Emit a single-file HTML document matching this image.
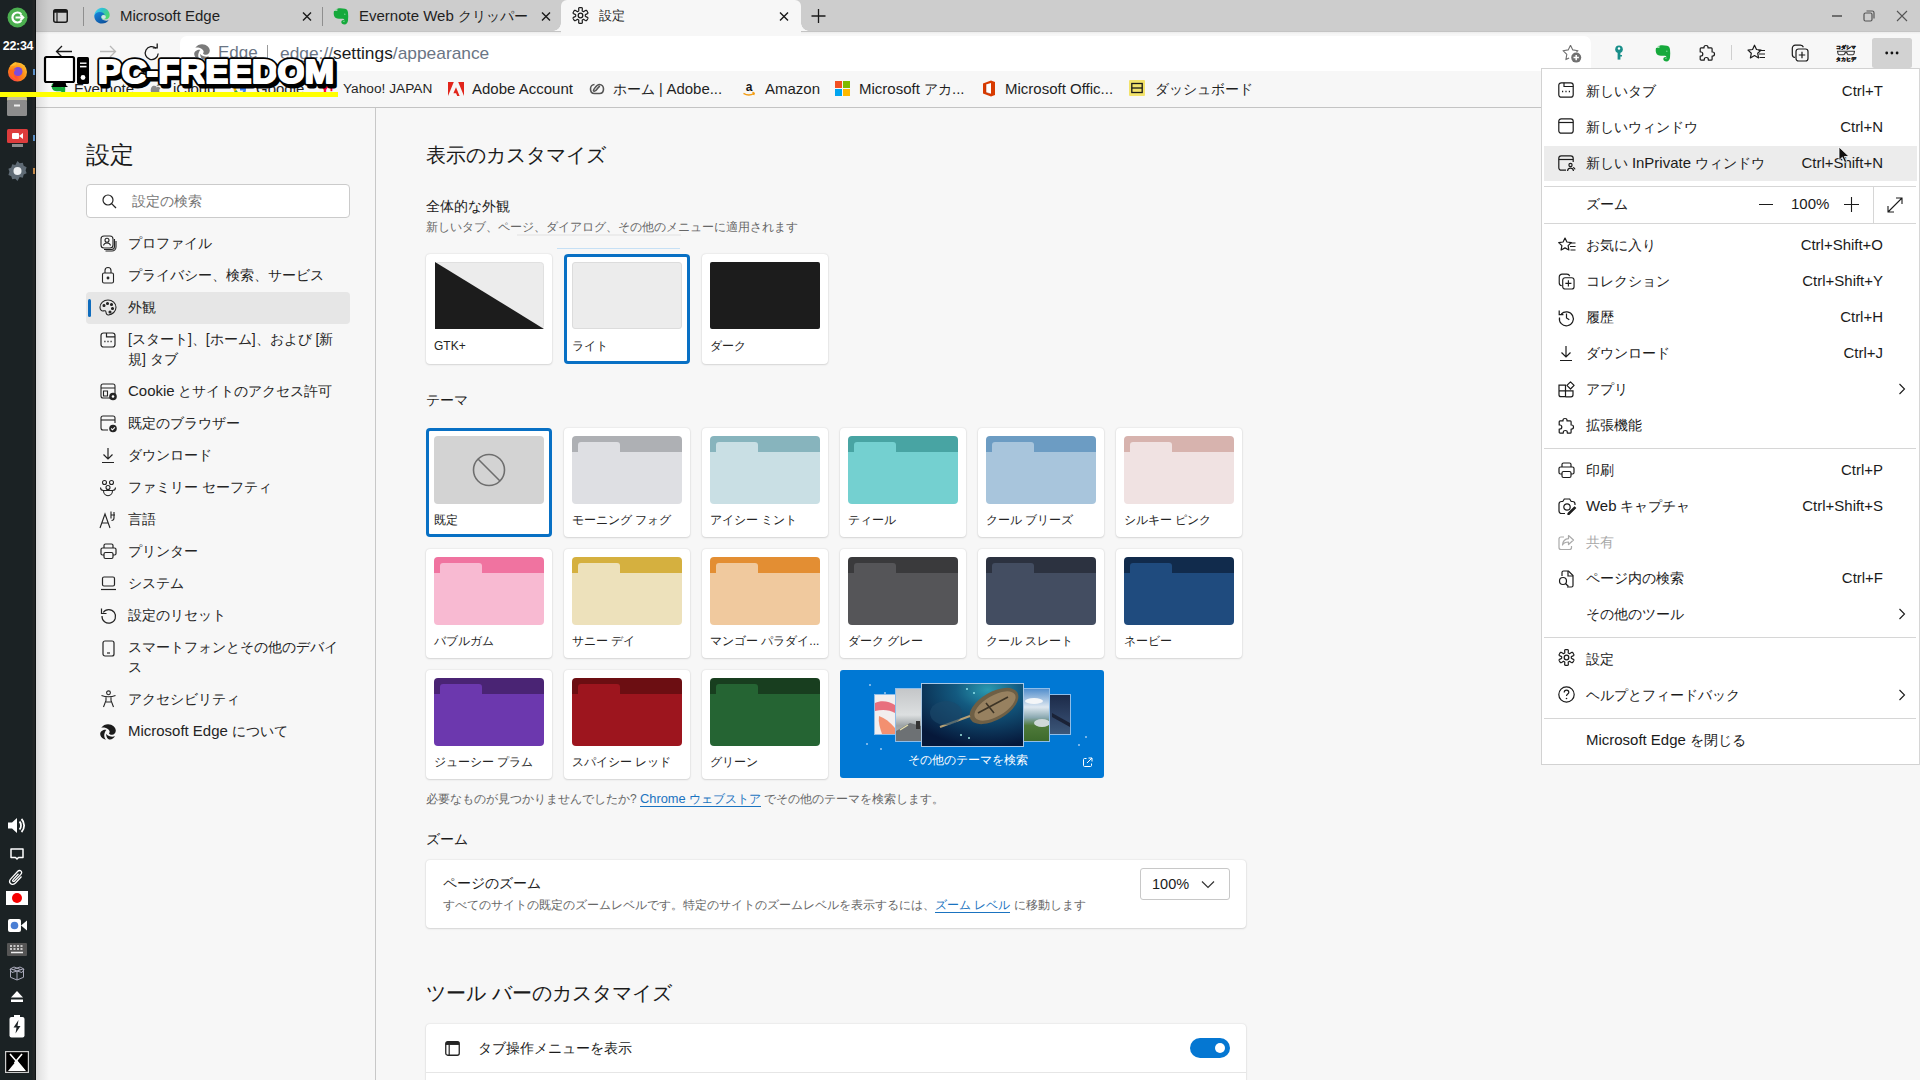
<!DOCTYPE html>
<html><head><meta charset="utf-8">
<style>
*{box-sizing:border-box}
html,body{margin:0;padding:0;width:1920px;height:1080px;overflow:hidden;background:#f7f7f7;font-family:"Liberation Sans",sans-serif;color:#242424}
.a{position:absolute}
.t{position:absolute;white-space:nowrap;line-height:20px;font-size:14px}
.l{font-size:1.07em}
svg{position:absolute;overflow:visible}
#taskbar{left:0;top:0;width:36px;height:1080px;background:linear-gradient(90deg,#1b2224 0,#1b2224 32px,#222526 33px,#222526 35px,#0e1213 35px)}
#tabstrip{left:36px;top:0;width:1884px;height:31px;background:#cdcdcd}
#toolbar{left:36px;top:31px;width:1884px;height:40px;background:#f7f7f7}
#bookmarks{left:36px;top:71px;width:1884px;height:37px;background:#f7f7f7;border-bottom:1px solid #c4c4c4}
#page{left:36px;top:108px;width:1884px;height:972px;background:#f7f7f7}
#sidebar-border{left:375px;top:108px;width:1px;height:972px;background:#c8c8c8}
.card{position:absolute;background:#fff;border-radius:4px;box-shadow:0 0 2px rgba(0,0,0,.14),0 1px 2px rgba(0,0,0,.10)}
.sel{box-shadow:none;border:3px solid #0f6cbd}
.pv{position:absolute;left:8px;top:8px;width:110px;height:68px;border-radius:4px;overflow:hidden}
.pv .band{position:absolute;left:0;top:0;width:110px;height:16px}
.pv .tab{position:absolute;left:6px;top:6px;width:42px;height:12px;border-radius:3px 3px 0 0}
.pv .body{position:absolute;left:0;top:16px;width:110px;height:52px}
.lbl{position:absolute;left:8px;top:82px;line-height:20px;font-size:12px;white-space:nowrap;color:#242424}
.mi{position:absolute;left:1586px;font-size:14px;line-height:20px;white-space:nowrap;color:#1b1b1b}
.ms{position:absolute;right:37px;font-size:14px;line-height:20px;white-space:nowrap;color:#1b1b1b;text-align:right}
.msep{position:absolute;left:1544px;width:372px;height:1px;background:#d6d6d6}
.si{position:absolute;left:128px;font-size:14px;line-height:20px;white-space:nowrap;color:#242424}
</style></head>
<body>
<!-- page background & regions -->
<div class="a" id="page"></div>
<div class="a" id="tabstrip"></div>
<div class="a" id="toolbar"></div>
<div class="a" style="left:36px;top:31px;width:525px;height:1px;background:#c4c4c4"></div>
<div class="a" style="left:801px;top:31px;width:1119px;height:1px;background:#c4c4c4"></div>
<div class="a" style="left:36px;top:32px;width:525px;height:2px;background:linear-gradient(#ececec,#f5f5f5)"></div>
<div class="a" style="left:801px;top:32px;width:1119px;height:2px;background:linear-gradient(#ececec,#f5f5f5)"></div>
<div class="a" style="left:36px;top:71px;width:1884px;height:1px;background:#ededed"></div>
<div class="a" id="bookmarks"></div>
<div class="a" id="sidebar-border"></div>
<div class="a" id="taskbar"></div>

<!-- ===== TAB STRIP ===== -->
<svg style="left:53px;top:9px" width="15" height="14" viewBox="0 0 15 14"><rect x="0.75" y="0.75" width="13.5" height="12.5" rx="2" fill="none" stroke="#1a1a1a" stroke-width="1.5"/><rect x="0.75" y="0.75" width="13.5" height="3" fill="#1a1a1a"/><line x1="4" y1="3.5" x2="4" y2="13" stroke="#1a1a1a" stroke-width="1.2"/></svg>
<div class="a" style="left:83px;top:7px;width:1px;height:19px;background:#8f8f8f"></div>
<svg style="left:93.5px;top:6.5px" width="16" height="17" viewBox="0 0 16 16"><defs><linearGradient id="eg1" x1="0" y1="0" x2="1" y2=".6"><stop offset="0" stop-color="#4fd2ff"/><stop offset=".45" stop-color="#2ec0cf"/><stop offset="1" stop-color="#4ed86a"/></linearGradient><linearGradient id="eg2" x1="0" y1="0" x2=".8" y2="1"><stop offset="0" stop-color="#1a86e0"/><stop offset="1" stop-color="#0b4f98"/></linearGradient></defs><path d="M8 .3c4.3 0 7.7 3.2 7.7 7.2 0 2.5-1.6 4.3-3.6 4.3H8.5C6 11.8 5.5 9 7 7.8 5.7 7.3 3.4 7.4.3 8.6.5 4 3.8.3 8 .3z" fill="url(#eg1)"/><ellipse cx="9.6" cy="9.6" rx="2.3" ry="2" fill="#d5e2e6"/><path d="M.3 8.4C1 5.9 3.2 4.4 5.8 4.4c2.8 0 4.7 1.5 5 3-1.5-.5-3.6 0-3.8 1.9-.2 2.3 2.4 4 5.4 3.9.8 0 1.6-.2 2.3-.5-1.4 2-3.9 3.3-6.7 3.3C3.6 16 .3 12.6.3 8.4z" fill="url(#eg2)"/></svg>
<div class="t" style="left:120px;top:6px;font-size:15px;color:#1f1f1f">Microsoft Edge</div>
<svg style="left:302px;top:12px" width="10" height="9" viewBox="0 0 10 9"><path d="M1 .5L9 8.5M9 .5L1 8.5" stroke="#1a1a1a" stroke-width="1.4"/></svg>
<div class="a" style="left:322px;top:7px;width:1px;height:19px;background:#8f8f8f"></div>
<svg style="left:332.5px;top:7.5px" width="16" height="17" viewBox="0 0 16 17"><path d="M4.3 .8L5.8.3c2-.2 4.3 0 6.2.5 2 .5 2.8 1.8 3 3.7.3 2.5.3 5.5 0 8-.2 2.3-1.5 4-3.5 4-2 0-3.2-1-3.2-2.5 0-1.2.9-2 2-2 .7 0 1.1.3 1.3.6-.1-.9-.6-1.6-1.6-1.8H6c-2.5 0-4.2-1-4.8-2.8-.6-1.5-.6-3.5-.2-5L4.3 3z" fill="#16a93c"/><path d="M1.4 2.8h2.5V.6z" fill="#7fd896"/><circle cx="11.8" cy="6.2" r=".8" fill="#6fd48a"/><path d="M10 13.8c.5-.6 1.4-.5 1.6.2" fill="none" stroke="#7fe09a" stroke-width=".9"/></svg>
<div class="t" style="left:359px;top:6px;font-size:15px;color:#1f1f1f">Evernote Web <span style="font-size:14px">クリッパー</span></div>
<svg style="left:541px;top:12px" width="10" height="9" viewBox="0 0 10 9"><path d="M1 .5L9 8.5M9 .5L1 8.5" stroke="#1a1a1a" stroke-width="1.4"/></svg>
<!-- active tab -->
<div class="a" style="left:561px;top:0;width:240px;height:32px;background:#f7f7f7;border-radius:6px 6px 0 0"></div>
<div class="a" style="left:553px;top:23px;width:8px;height:8px;background:radial-gradient(circle at 0 0,#cdcdcd 7.5px,#f7f7f7 8px)"></div>
<div class="a" style="left:801px;top:23px;width:8px;height:8px;background:radial-gradient(circle at 100% 0,#cdcdcd 7.5px,#f7f7f7 8px)"></div>
<svg style="left:571.5px;top:7px" width="17" height="17" viewBox="0 0 17 17"><path d="M8.50 0.60 L8.64 0.60 L8.78 0.60 L8.91 0.61 L9.05 0.62 L9.19 0.63 L9.33 0.64 L9.46 0.66 L9.60 0.68 L9.73 0.71 L9.87 0.75 L10.00 0.80 L10.12 0.89 L10.23 1.03 L10.30 1.27 L10.34 1.64 L10.32 2.16 L10.27 2.72 L10.22 3.21 L10.21 3.55 L10.23 3.76 L10.27 3.89 L10.33 3.98 L10.39 4.04 L10.46 4.09 L10.54 4.13 L10.61 4.18 L10.68 4.22 L10.76 4.26 L10.83 4.30 L10.90 4.34 L10.98 4.38 L11.05 4.42 L11.12 4.47 L11.19 4.51 L11.26 4.55 L11.34 4.59 L11.42 4.63 L11.50 4.66 L11.61 4.66 L11.74 4.64 L11.94 4.55 L12.22 4.36 L12.62 4.08 L13.08 3.76 L13.52 3.48 L13.86 3.32 L14.11 3.27 L14.28 3.29 L14.42 3.36 L14.53 3.44 L14.63 3.54 L14.72 3.64 L14.81 3.75 L14.89 3.86 L14.97 3.97 L15.05 4.08 L15.13 4.20 L15.20 4.31 L15.27 4.43 L15.34 4.55 L15.41 4.67 L15.48 4.79 L15.54 4.91 L15.60 5.04 L15.66 5.16 L15.72 5.29 L15.77 5.41 L15.82 5.54 L15.86 5.67 L15.90 5.81 L15.91 5.95 L15.90 6.10 L15.83 6.26 L15.67 6.45 L15.36 6.66 L14.90 6.90 L14.38 7.14 L13.94 7.34 L13.64 7.50 L13.47 7.62 L13.37 7.73 L13.33 7.82 L13.31 7.91 L13.30 8.00 L13.30 8.08 L13.30 8.16 L13.30 8.25 L13.30 8.33 L13.30 8.42 L13.31 8.50 L13.30 8.58 L13.30 8.67 L13.30 8.75 L13.30 8.84 L13.30 8.92 L13.30 9.00 L13.31 9.09 L13.33 9.18 L13.37 9.27 L13.47 9.38 L13.64 9.50 L13.94 9.66 L14.38 9.86 L14.90 10.10 L15.36 10.34 L15.67 10.55 L15.83 10.74 L15.90 10.90 L15.91 11.05 L15.90 11.19 L15.86 11.33 L15.82 11.46 L15.77 11.59 L15.72 11.71 L15.66 11.84 L15.60 11.96 L15.54 12.09 L15.48 12.21 L15.41 12.33 L15.34 12.45 L15.27 12.57 L15.20 12.69 L15.13 12.80 L15.05 12.92 L14.97 13.03 L14.89 13.14 L14.81 13.25 L14.72 13.36 L14.63 13.46 L14.53 13.56 L14.42 13.64 L14.28 13.71 L14.11 13.73 L13.86 13.68 L13.52 13.52 L13.08 13.24 L12.62 12.92 L12.22 12.64 L11.94 12.45 L11.74 12.36 L11.61 12.34 L11.50 12.34 L11.42 12.37 L11.34 12.41 L11.26 12.45 L11.19 12.49 L11.12 12.53 L11.05 12.58 L10.98 12.62 L10.90 12.66 L10.83 12.70 L10.76 12.74 L10.68 12.78 L10.61 12.82 L10.54 12.87 L10.46 12.91 L10.39 12.96 L10.33 13.02 L10.27 13.11 L10.23 13.24 L10.21 13.45 L10.22 13.79 L10.27 14.28 L10.32 14.84 L10.34 15.36 L10.30 15.73 L10.23 15.97 L10.12 16.11 L10.00 16.20 L9.87 16.25 L9.73 16.29 L9.60 16.32 L9.46 16.34 L9.33 16.36 L9.19 16.37 L9.05 16.38 L8.91 16.39 L8.78 16.40 L8.64 16.40 L8.50 16.40 L8.36 16.40 L8.22 16.40 L8.09 16.39 L7.95 16.38 L7.81 16.37 L7.67 16.36 L7.54 16.34 L7.40 16.32 L7.27 16.29 L7.13 16.25 L7.00 16.20 L6.88 16.11 L6.77 15.97 L6.70 15.73 L6.66 15.36 L6.68 14.84 L6.73 14.28 L6.78 13.79 L6.79 13.45 L6.77 13.24 L6.73 13.11 L6.67 13.02 L6.61 12.96 L6.54 12.91 L6.46 12.87 L6.39 12.82 L6.32 12.78 L6.24 12.74 L6.17 12.70 L6.10 12.66 L6.02 12.62 L5.95 12.58 L5.88 12.53 L5.81 12.49 L5.74 12.45 L5.66 12.41 L5.58 12.37 L5.50 12.34 L5.39 12.34 L5.26 12.36 L5.06 12.45 L4.78 12.64 L4.38 12.92 L3.92 13.24 L3.48 13.52 L3.14 13.68 L2.89 13.73 L2.72 13.71 L2.58 13.64 L2.47 13.56 L2.37 13.46 L2.28 13.36 L2.19 13.25 L2.11 13.14 L2.03 13.03 L1.95 12.92 L1.87 12.80 L1.80 12.69 L1.73 12.57 L1.66 12.45 L1.59 12.33 L1.52 12.21 L1.46 12.09 L1.40 11.96 L1.34 11.84 L1.28 11.71 L1.23 11.59 L1.18 11.46 L1.14 11.33 L1.10 11.19 L1.09 11.05 L1.10 10.90 L1.17 10.74 L1.33 10.55 L1.64 10.34 L2.10 10.10 L2.62 9.86 L3.06 9.66 L3.36 9.50 L3.53 9.38 L3.63 9.27 L3.67 9.18 L3.69 9.09 L3.70 9.00 L3.70 8.92 L3.70 8.84 L3.70 8.75 L3.70 8.67 L3.70 8.58 L3.69 8.50 L3.70 8.42 L3.70 8.33 L3.70 8.25 L3.70 8.16 L3.70 8.08 L3.70 8.00 L3.69 7.91 L3.67 7.82 L3.63 7.73 L3.53 7.62 L3.36 7.50 L3.06 7.34 L2.62 7.14 L2.10 6.90 L1.64 6.66 L1.33 6.45 L1.17 6.26 L1.10 6.10 L1.09 5.95 L1.10 5.81 L1.14 5.67 L1.18 5.54 L1.23 5.41 L1.28 5.29 L1.34 5.16 L1.40 5.04 L1.46 4.91 L1.52 4.79 L1.59 4.67 L1.66 4.55 L1.73 4.43 L1.80 4.31 L1.87 4.20 L1.95 4.08 L2.03 3.97 L2.11 3.86 L2.19 3.75 L2.28 3.64 L2.37 3.54 L2.47 3.44 L2.58 3.36 L2.72 3.29 L2.89 3.27 L3.14 3.32 L3.48 3.48 L3.92 3.76 L4.38 4.08 L4.78 4.36 L5.06 4.55 L5.26 4.64 L5.39 4.66 L5.50 4.66 L5.58 4.63 L5.66 4.59 L5.74 4.55 L5.81 4.51 L5.88 4.47 L5.95 4.42 L6.02 4.38 L6.10 4.34 L6.17 4.30 L6.24 4.26 L6.32 4.22 L6.39 4.18 L6.46 4.13 L6.54 4.09 L6.61 4.04 L6.67 3.98 L6.73 3.89 L6.77 3.76 L6.79 3.55 L6.78 3.21 L6.73 2.72 L6.68 2.16 L6.66 1.64 L6.70 1.27 L6.77 1.03 L6.88 0.89 L7.00 0.80 L7.13 0.75 L7.27 0.71 L7.40 0.68 L7.54 0.66 L7.67 0.64 L7.81 0.63 L7.95 0.62 L8.09 0.61 L8.22 0.60 L8.36 0.60z" fill="none" stroke="#1b1b1b" stroke-width="1.2" stroke-linejoin="round"/><circle cx="8.5" cy="8.5" r="2.3" fill="none" stroke="#1b1b1b" stroke-width="1.3"/></svg>
<div class="t" style="left:599px;top:6px;font-size:13px;color:#1f1f1f">設定</div>
<svg style="left:779px;top:12px" width="10" height="9" viewBox="0 0 10 9"><path d="M1 .5L9 8.5M9 .5L1 8.5" stroke="#1a1a1a" stroke-width="1.4"/></svg>
<svg style="left:811px;top:9px" width="15" height="14" viewBox="0 0 15 14"><path d="M7.5 0V14M0.5 7H14.5" stroke="#1a1a1a" stroke-width="1.3"/></svg>
<!-- window controls -->
<div class="a" style="left:1832px;top:15px;width:10px;height:2px;background:#6e6e6e"></div>
<svg style="left:1863px;top:10px" width="12" height="12" viewBox="0 0 12 12"><rect x="1" y="3" width="8" height="8" rx="1.5" fill="none" stroke="#555" stroke-width="1.2"/><path d="M3.5 1H9.2C10.2 1 11 1.8 11 2.8V8.5" fill="none" stroke="#555" stroke-width="1.2"/></svg>
<svg style="left:1896px;top:10px" width="12" height="12" viewBox="0 0 12 12"><path d="M1 1L11 11M11 1L1 11" stroke="#555" stroke-width="1.1"/></svg>

<!-- ===== TOOLBAR ===== -->
<svg style="left:55px;top:45px" width="18" height="13" viewBox="0 0 18 13"><path d="M17 6.5H1.5M7 1L1.5 6.5 7 12" fill="none" stroke="#1a1a1a" stroke-width="1.3"/></svg>
<svg style="left:99px;top:45px" width="18" height="13" viewBox="0 0 18 13"><path d="M1 6.5H16.5M11 1l5.5 5.5L11 12" fill="none" stroke="#b8b8b8" stroke-width="1.3"/></svg>
<svg style="left:143px;top:44px" width="18" height="18" viewBox="0 0 18 18"><path d="M15.2 9.5A6.5 6.5 0 1 1 13 4.2" fill="none" stroke="#1a1a1a" stroke-width="1.3"/><path d="M9.8 3.9H14.2V-.5" fill="none" stroke="#1a1a1a" stroke-width="1.3"/></svg>
<div class="a" style="left:180px;top:36px;width:1411px;height:35px;background:#fff;border-radius:7px 7px 0 0"></div>
<svg style="left:194px;top:44px" width="16" height="16" viewBox="0 0 16 16" fill="#7a7a7a"><path d="M1.3 3.8C3 1.3 5.5.2 8 .2c4.5 0 7.8 3.1 7.8 6.4 0 2.4-1.8 4.2-3.8 4.2-1.4 0-2.6-.6-3-1.4.6-.6.8-1.4.5-2.3C8.8 5.3 6.6 3.9 4.2 3.6c-1-.1-2 0-2.9.2z"/><path d="M6.4 5.9C3.3 5.5.2 7.3.2 9.8c0 2.7 2.3 5.2 5.7 6-1.3-1.5-1.9-3.5-1.6-5.3.3-2 1-3.7 2.1-4.6z"/><path d="M6.2 9.8c-.2 2.7 1.3 5.7 3.8 5.8 2 0 3.8-1.6 5-3.4-1.5.5-3.5.6-5.2.1-1.8-.6-3-1.5-3.6-2.5z"/></svg>
<div class="t" style="left:218px;top:43px;font-size:17px;color:#6a7585">Edge</div>
<div class="a" style="left:267px;top:45px;width:1px;height:13px;background:#9a9a9a"></div>
<div class="t" style="left:280px;top:43px;font-size:17.35px;color:#6a7585">edge://<span style="color:#1b1b1b">settings</span>/appearance</div>
<svg style="left:1562px;top:44px" width="20" height="19" viewBox="0 0 20 19"><path d="M8.5 1.2l2.3 4.7 5.2.8-1.6 1.5M8.5 1.2L6.2 5.9 1 6.7l3.8 3.7-.9 5.2 3.2-1.7" fill="none" stroke="#707070" stroke-width="1.1" stroke-linejoin="round"/><circle cx="14.2" cy="13.6" r="5" fill="#707070"/><path d="M14.2 10.9v5.4M11.5 13.6h5.4" stroke="#fff" stroke-width="1.5"/></svg>
<svg style="left:1614px;top:45px" width="10" height="15" viewBox="0 0 10 15"><circle cx="5" cy="4.2" r="3.8" fill="#1a8f8a"/><rect x="3.6" y="6" width="2.8" height="8.6" fill="#1a8f8a"/><rect x="5.5" y="10" width="2.5" height="1.5" fill="#1a8f8a"/><circle cx="5" cy="3.5" r="1.2" fill="#fff"/></svg>
<svg style="left:1655px;top:44.5px" width="16" height="17" viewBox="0 0 16 17"><path d="M4.3 .8L5.8.3c2-.2 4.3 0 6.2.5 2 .5 2.8 1.8 3 3.7.3 2.5.3 5.5 0 8-.2 2.3-1.5 4-3.5 4-2 0-3.2-1-3.2-2.5 0-1.2.9-2 2-2 .7 0 1.1.3 1.3.6-.1-.9-.6-1.6-1.6-1.8H6c-2.5 0-4.2-1-4.8-2.8-.6-1.5-.6-3.5-.2-5L4.3 3z" fill="#16a93c"/><path d="M1.4 2.8h2.5V.6z" fill="#7fd896"/><circle cx="11.8" cy="6.2" r=".8" fill="#6fd48a"/><path d="M10 13.8c.5-.6 1.4-.5 1.6.2" fill="none" stroke="#7fe09a" stroke-width=".9"/></svg>
<svg style="left:1699px;top:44px" width="17" height="17" viewBox="0 0 17 17"><path d="M7 1.5c1.2 0 2 .8 2 1.8v.6h3.2c.5 0 .9.4.9.9V8h.6c1 0 1.8.8 1.8 2s-.8 2-1.8 2h-.6v3.2c0 .5-.4.9-.9.9H9.3v-.8c0-1-.9-1.8-2-1.8s-2 .8-2 1.8v.8H2.1c-.5 0-.9-.4-.9-.9V12h.8c1 0 1.8-.8 1.8-2S3 8 2 8h-.8V4.8c0-.5.4-.9.9-.9H5v-.6c0-1 .8-1.8 2-1.8z" fill="none" stroke="#1a1a1a" stroke-width="1.2" stroke-linejoin="round"/></svg>
<div class="a" style="left:1731px;top:45px;width:1px;height:15px;background:#cfcfcf"></div>
<svg style="left:1747px;top:44px" width="19" height="17" viewBox="0 0 19 17"><path d="M7.5 1.2l2 4.3 4.6.6-3.4 3.2.9 4.6-4.1-2.3-4.1 2.3.9-4.6L1 6.1l4.6-.6z" fill="none" stroke="#1a1a1a" stroke-width="1.2" stroke-linejoin="round"/><path d="M11.5 6.5h6.5M12 10h6M12.5 13.5h5.5" stroke="#1a1a1a" stroke-width="1.2"/></svg>
<svg style="left:1791px;top:44px" width="18" height="18" viewBox="0 0 18 18"><path d="M4 13.5c-1.5-.2-2.7-1.4-2.7-3V4.2c0-1.6 1.3-3 3-3h5.2c1.4 0 2.5.9 2.9 2.1" fill="none" stroke="#1a1a1a" stroke-width="1.2"/><rect x="5" y="5" width="12" height="12" rx="2.5" fill="none" stroke="#1a1a1a" stroke-width="1.2"/><path d="M11 7.8v6.4M7.8 11h6.4" stroke="#1a1a1a" stroke-width="1.2"/></svg>
<svg style="left:1836px;top:44px" width="20" height="18" viewBox="0 0 20 18"><g font-family="Liberation Sans" font-weight="bold" font-size="5.2" text-anchor="middle" fill="#111" stroke="#111" stroke-width=".35"><text x="10" y="5.3">コダシマ</text><text x="10" y="16.8">タカヒデ</text></g><path d="M1.5 7.3h17l-.6 2.6c-.2.6-.7.9-1.3.9h-4c-.6 0-1-.3-1.2-.9L10.8 8.6H9.2l-.6 1.3c-.2.6-.6.9-1.2.9h-4c-.6 0-1.1-.3-1.3-.9z" fill="none" stroke="#333" stroke-width="1.1" stroke-linejoin="round"/></svg>
<div class="a" style="left:1872px;top:38px;width:40px;height:30px;background:#d2d2d2;border-radius:2.5px"></div>
<svg style="left:1884px;top:51px" width="16" height="4" viewBox="0 0 16 4"><circle cx="2.7" cy="2" r="1.4" fill="#111"/><circle cx="7.9" cy="2" r="1.4" fill="#111"/><circle cx="13.1" cy="2" r="1.4" fill="#111"/></svg>

<!-- ===== BOOKMARKS ===== -->
<svg style="left:51px;top:81px" width="15" height="16" viewBox="0 0 16 17"><path d="M4.3 .8L5.8.3c2-.2 4.3 0 6.2.5 2 .5 2.8 1.8 3 3.7.3 2.5.3 5.5 0 8-.2 2.3-1.5 4-3.5 4-2 0-3.2-1-3.2-2.5 0-1.2.9-2 2-2 .7 0 1.1.3 1.3.6-.1-.9-.6-1.6-1.6-1.8H6c-2.5 0-4.2-1-4.8-2.8-.6-1.5-.6-3.5-.2-5L4.3 3z" fill="#16a93c"/><path d="M1.4 2.8h2.5V.6z" fill="#7fd896"/><circle cx="11.8" cy="6.2" r=".8" fill="#6fd48a"/><path d="M10 13.8c.5-.6 1.4-.5 1.6.2" fill="none" stroke="#7fe09a" stroke-width=".9"/></svg>
<div class="t" style="left:74px;top:79px;font-size:15px;color:#1f1f1f">Evernote</div>
<svg style="left:150px;top:82px" width="13" height="15" viewBox="0 0 13 15"><path d="M6.5 3.5c1-1.3 2.3-1.6 3-1.5-.1 1-.6 2-1.5 2.6M6.5 4.5c-1.5-1-3.8-1-5 .8-1.5 2.2-.6 6 1.1 8 .9 1 1.6 1.1 2.5.6.7-.3 1.2-.3 1.9 0 .9.5 1.7.3 2.5-.7.6-.7 1-1.5 1.2-2.2-1.6-.7-2-2.6-.9-4 .2-.3.5-.5.8-.7-1.4-1.6-3-1.4-4.1-.8z" fill="#8a8a8a"/></svg>
<div class="t" style="left:173px;top:79px;font-size:15px;color:#1f1f1f">iCloud</div>
<svg style="left:233px;top:82px" width="14" height="14" viewBox="0 0 14 14"><path d="M13 7.2c0-.5 0-.9-.1-1.3H7v2.5h3.4c-.2.8-.6 1.5-1.3 1.9v1.6h2.1C12.3 10.8 13 9.2 13 7.2z" fill="#4285f4"/><path d="M7 13.2c1.7 0 3.2-.6 4.2-1.5l-2.1-1.6c-.6.4-1.3.6-2.1.6-1.7 0-3.1-1.1-3.6-2.6H1.3v1.7C2.4 11.9 4.5 13.2 7 13.2z" fill="#34a853"/><path d="M3.4 8.1c-.1-.4-.2-.8-.2-1.2s.1-.8.2-1.2V4H1.3C.8 4.9.6 5.9.6 6.9s.2 2 .7 2.9z" fill="#fbbc05"/><path d="M7 3.1c.9 0 1.8.3 2.4.9l1.8-1.8C10.2 1.2 8.7.6 7 .6 4.5.6 2.4 2 1.3 4l2.1 1.7C3.9 4.2 5.3 3.1 7 3.1z" fill="#ea4335"/></svg>
<div class="t" style="left:256px;top:79px;font-size:15px;color:#1f1f1f">Google</div>
<div class="t" style="left:320px;top:79px;font-size:15px;font-weight:bold;color:#ff0033;letter-spacing:-1px">Y!</div>
<div class="t" style="left:343px;top:79px;font-size:13.7px;color:#1f1f1f">Yahoo! JAPAN</div>
<svg style="left:448px;top:82px" width="16" height="14" viewBox="0 0 16 14"><path d="M0 0H5.8L0 14zM16 0H10.2L16 14zM8 5.2L11.6 14H9.2l-1.1-2.8H5.4z" fill="#e1251b"/></svg>
<div class="t" style="left:472px;top:79px;font-size:15px;color:#1f1f1f">Adobe Account</div>
<svg style="left:589px;top:83px" width="16" height="12" viewBox="0 0 16 12"><path d="M5.5 1.5C3.2 1.5 1.5 3.3 1.5 6s1.7 4.5 4 4.5h5c2.3 0 4-1.8 4-4.5s-1.7-4.5-4-4.5c-2 0-3.2 1.5-4.6 3.4C4.6 6.6 3.8 8 5.3 8.3c1.3.2 2-1 3.6-3.3 1-1.4 1.5-1.6 2.2-1.6" fill="none" stroke="#555" stroke-width="1.6"/></svg>
<div class="t" style="left:613px;top:79px;font-size:14px;color:#1f1f1f">ホーム | <span class="l">Adobe...</span></div>
<svg style="left:741px;top:81px" width="16" height="17" viewBox="0 0 16 17"><text x="8" y="10" font-size="12" font-weight="bold" text-anchor="middle" fill="#1a1a1a" font-family="Liberation Sans">a</text><path d="M2.5 12.3c3.2 2 7.5 2 10.5 0M11.5 11.2l1.7 1-.6 1.8" fill="none" stroke="#f39c12" stroke-width="1.4"/></svg>
<div class="t" style="left:765px;top:79px;font-size:15px;color:#1f1f1f">Amazon</div>
<svg style="left:835px;top:81px" width="15" height="15" viewBox="0 0 15 15"><rect x="0" y="0" width="7" height="7" fill="#f25022"/><rect x="8" y="0" width="7" height="7" fill="#7fba00"/><rect x="0" y="8" width="7" height="7" fill="#00a4ef"/><rect x="8" y="8" width="7" height="7" fill="#ffb900"/></svg>
<div class="t" style="left:859px;top:79px;font-size:15px;color:#1f1f1f">Microsoft <span style="font-size:14px">アカ</span>...</div>
<svg style="left:982px;top:80px" width="14" height="17" viewBox="0 0 14 17"><path d="M1 3.5L9 .5l4 1.5v13l-4 1.5-8-3z" fill="#d83b01"/><path d="M4 4.5L9 3v11l-5-1.5z" fill="#fff"/><path d="M4 4.5V12.5L9 14" fill="none" stroke="#a52a0f" stroke-width=".5"/></svg>
<div class="t" style="left:1005px;top:79px;font-size:15px;color:#1f1f1f">Microsoft Offic...</div>
<svg style="left:1129px;top:80px" width="16" height="16" viewBox="0 0 16 16"><rect x="0" y="0" width="16" height="16" rx="1" fill="#f3e36b"/><rect x="2.8" y="3.5" width="10.4" height="9" fill="none" stroke="#1a1a1a" stroke-width="1.3"/><path d="M2.8 8h10.4" stroke="#1a1a1a" stroke-width="1.3"/></svg>
<div class="t" style="left:1155px;top:79px;font-size:14px;color:#1f1f1f">ダッシュボード</div>

<!-- ===== SETTINGS SIDEBAR ===== -->
<div class="t" style="left:86px;top:140px;font-size:24px;line-height:30px;color:#1b1b1b">設定</div>
<div class="a" style="left:86px;top:184px;width:264px;height:34px;background:#fff;border:1px solid #cbcbcb;border-radius:4px"></div>
<svg style="left:102px;top:194px" width="15" height="15" viewBox="0 0 15 15"><circle cx="6" cy="6" r="5" fill="none" stroke="#242424" stroke-width="1.2"/><path d="M9.6 9.6L14 14" stroke="#242424" stroke-width="1.3"/></svg>
<div class="t" style="left:132px;top:191px;font-size:14px;color:#767676">設定の検索</div>
<div class="a" style="left:86px;top:292px;width:264px;height:32px;background:#e6e6e6;border-radius:4px"></div>
<div class="a" style="left:88px;top:299px;width:3px;height:18px;background:#0f6cbd;border-radius:2px"></div>
<!-- icons -->
<svg style="left:100px;top:235px" width="17" height="17" viewBox="0 0 17 17" fill="none" stroke="#242424" stroke-width="1.1"><rect x="1" y="1" width="12" height="12" rx="3"/><circle cx="7" cy="5.2" r="2"/><path d="M3.5 10.5c.3-1.5 1.7-2.5 3.5-2.5s3.2 1 3.5 2.5"/><path d="M14.5 4v7.5c0 1.7-1.3 3-3 3H4"/><path d="M16 6v6c0 2.2-1.8 4-4 4H5.5"/></svg>
<svg style="left:100px;top:266px" width="16" height="18" viewBox="0 0 16 18" fill="none" stroke="#242424" stroke-width="1.1"><rect x="2.5" y="7" width="11" height="10" rx="1.5"/><path d="M5 7V4.5C5 2.8 6.3 1.5 8 1.5s3 1.3 3 3V7"/><circle cx="8" cy="12" r=".9" fill="#242424"/></svg>
<svg style="left:99px;top:299px" width="18" height="17" viewBox="0 0 18 17" fill="none" stroke="#242424" stroke-width="1.1"><path d="M9 1C4.6 1 1 4.2 1 8.2c0 2.6 1.6 4.2 3.5 3.7 1.4-.4 2.3-.2 2.5 1.3.2 1.9 1.2 3 2.5 2.8 4-.5 7.5-3.6 7.5-7.8C17 4.2 13.4 1 9 1z"/><circle cx="5" cy="6.5" r="1" fill="#242424"/><circle cx="8.5" cy="4.5" r="1" fill="#242424"/><circle cx="12.5" cy="5.5" r="1" fill="#242424"/><circle cx="13.5" cy="9.5" r="1" fill="#242424"/><circle cx="11" cy="13" r="1" fill="#242424"/></svg>
<svg style="left:100px;top:332px" width="16" height="16" viewBox="0 0 16 16" fill="none" stroke="#242424" stroke-width="1.2"><rect x="1" y="1" width="14" height="14" rx="2.5"/><path d="M6.5 1V4.8H15"/><path d="M4.3 9.5h1.2M7.4 9.5h1.2M10.5 9.5h1.2" stroke-width="1.6"/></svg>
<svg style="left:100px;top:383px" width="18" height="18" viewBox="0 0 18 18" fill="none" stroke="#242424" stroke-width="1.1"><rect x="1" y="1" width="14" height="14" rx="2"/><path d="M1 5h14M3.5 8h4v5h-4z"/><circle cx="13" cy="13.5" r="3.8" fill="#242424" stroke="none"/><circle cx="13" cy="13.5" r="1.3" fill="#fff" stroke="none"/></svg>
<svg style="left:100px;top:415px" width="18" height="18" viewBox="0 0 18 18" fill="none" stroke="#242424" stroke-width="1.1"><path d="M8 15H3c-1.1 0-2-.9-2-2V3c0-1.1.9-2 2-2h10c1.1 0 2 .9 2 2v5"/><path d="M1 5h14"/><circle cx="13" cy="13.5" r="3.8" fill="#242424" stroke="none"/><path d="M11.2 13.5l1.3 1.3 2.4-2.4" stroke="#fff" stroke-width="1.1"/></svg>
<svg style="left:100px;top:447px" width="16" height="17" viewBox="0 0 16 17" fill="none" stroke="#242424" stroke-width="1.2"><path d="M8 1v11M3.5 7.5L8 12l4.5-4.5M2 15.5h12"/></svg>
<svg style="left:99px;top:479px" width="18" height="18" viewBox="0 0 18 18" fill="none" stroke="#242424" stroke-width="1.1"><circle cx="5.5" cy="3.5" r="2"/><circle cx="12.5" cy="3.5" r="2"/><circle cx="9" cy="8.5" r="2"/><path d="M1.5 8.5c0 2 1.5 3 3 3M16.5 8.5c0 2-1.5 3-3 3"/><path d="M4.5 11.5c0 3 2 5.2 4.5 5.2s4.5-2.2 4.5-5.2z"/></svg>
<svg style="left:99px;top:510px" width="18" height="19" viewBox="0 0 18 19" fill="none" stroke="#242424" stroke-width="1.1"><path d="M1 18L6 4l5 14M2.8 13h6.4"/><path d="M12 1.5v7M12 5h4M15 2v6c0 1.5-1 2.5-2.5 2.5"/></svg>
<svg style="left:100px;top:543px" width="17" height="17" viewBox="0 0 17 17" fill="none" stroke="#242424" stroke-width="1.2"><path d="M4 5V2.5C4 1.7 4.7 1 5.5 1h6c.8 0 1.5.7 1.5 1.5V5"/><path d="M4 12H2.5C1.7 12 1 11.3 1 10.5v-4C1 5.7 1.7 5 2.5 5h12c.8 0 1.5.7 1.5 1.5v4c0 .8-.7 1.5-1.5 1.5H13"/><rect x="4" y="9.5" width="9" height="6" rx="1.5"/></svg>
<svg style="left:100px;top:576px" width="17" height="15" viewBox="0 0 17 15" fill="none" stroke="#242424" stroke-width="1.2"><rect x="2.5" y="1" width="12" height="9" rx="1.5"/><path d="M1 13.5h15"/></svg>
<svg style="left:100px;top:607px" width="17" height="17" viewBox="0 0 17 17" fill="none" stroke="#242424" stroke-width="1.2"><path d="M3.2 5.5A6.8 6.8 0 1 1 2 9"/><path d="M1.5 1.5v5h5"/></svg>
<svg style="left:102px;top:640px" width="13" height="17" viewBox="0 0 13 17" fill="none" stroke="#242424" stroke-width="1.2"><rect x="1" y="1" width="11" height="15" rx="2"/><path d="M5 13h3"/></svg>
<svg style="left:100px;top:690px" width="17" height="18" viewBox="0 0 17 18" fill="none" stroke="#242424" stroke-width="1.1"><circle cx="8.5" cy="2.8" r="1.9"/><path d="M1.5 5.5c2.5 1 4.5 1.3 7 1.3s4.5-.3 7-1.3M6 7v3.5L3.5 17M11 7v3.5l2.5 6.5M6 12h5"/></svg>
<svg style="left:100px;top:724px" width="16" height="16" viewBox="0 0 16 16" fill="#1b1b1b"><path d="M1.3 3.8C3 1.3 5.5.2 8 .2c4.5 0 7.8 3.1 7.8 6.4 0 2.4-1.8 4.2-3.8 4.2-1.4 0-2.6-.6-3-1.4.6-.6.8-1.4.5-2.3C8.8 5.3 6.6 3.9 4.2 3.6c-1-.1-2 0-2.9.2z"/><path d="M6.4 5.9C3.3 5.5.2 7.3.2 9.8c0 2.7 2.3 5.2 5.7 6-1.3-1.5-1.9-3.5-1.6-5.3.3-2 1-3.7 2.1-4.6z"/><path d="M6.2 9.8c-.2 2.7 1.3 5.7 3.8 5.8 2 0 3.8-1.6 5-3.4-1.5.5-3.5.6-5.2.1-1.8-.6-3-1.5-3.6-2.5z"/></svg>
<!-- labels -->
<div class="si" style="top:233px">プロファイル</div>
<div class="si" style="top:265px">プライバシー、検索、サービス</div>
<div class="si" style="top:297px">外観</div>
<div class="si" style="top:329px">[スタート]、[ホーム]、および [新<br>規] タブ</div>
<div class="si" style="top:381px"><span class="l">Cookie</span> とサイトのアクセス許可</div>
<div class="si" style="top:413px">既定のブラウザー</div>
<div class="si" style="top:445px">ダウンロード</div>
<div class="si" style="top:477px">ファミリー セーフティ</div>
<div class="si" style="top:509px">言語</div>
<div class="si" style="top:541px">プリンター</div>
<div class="si" style="top:573px">システム</div>
<div class="si" style="top:605px">設定のリセット</div>
<div class="si" style="top:637px">スマートフォンとその他のデバイ<br>ス</div>
<div class="si" style="top:689px">アクセシビリティ</div>
<div class="si" style="top:721px"><span class="l">Microsoft Edge</span> について</div>

<!-- ===== MAIN CONTENT ===== -->
<div class="t" style="left:426px;top:141px;font-size:20px;line-height:28px;color:#1b1b1b">表示のカスタマイズ</div>
<div class="t" style="left:426px;top:196px;font-size:14px;color:#1b1b1b">全体的な外観</div>
<div class="t" style="left:426px;top:217px;font-size:12px;color:#676767">新しいタブ、ページ、ダイアログ、その他のメニューに適用されます</div>
<div class="a" style="left:517px;top:234px;width:164px;height:2px;background:#ececec"></div>
<div class="a" style="left:557px;top:248px;width:123px;height:1px;background:#c6e0f5"></div>
<!-- appearance cards -->
<div class="card" style="left:426px;top:254px;width:126px;height:110px">
  <svg style="left:9px;top:8px" width="109" height="67" viewBox="0 0 109 67"><rect x=".5" y=".5" width="108" height="66" rx="3" fill="#ececec" stroke="#e0e0e0"/><path d="M0 0L109 67H0z" fill="#1c1c1c"/></svg>
  <div class="lbl" style="left:8px">GTK+</div>
</div>
<div class="card" style="left:564px;top:254px;width:126px;height:110px;box-shadow:inset 0 0 0 3px #0870c4">
  <div class="a" style="left:8px;top:8px;width:110px;height:67px;background:#ececec;border:1px solid #dcdcdc;border-radius:3px"></div>
  <div class="lbl" style="left:8px">ライト</div>
</div>
<div class="card" style="left:702px;top:254px;width:126px;height:110px">
  <div class="a" style="left:8px;top:8px;width:110px;height:67px;background:#1c1c1c;border-radius:2px"></div>
  <div class="lbl" style="left:8px">ダーク</div>
</div>
<div class="t" style="left:426px;top:390px;font-size:14px;color:#1b1b1b">テーマ</div>
<!-- theme cards row 1 -->
<div class="card" style="left:426px;top:428px;width:126px;height:109px;box-shadow:inset 0 0 0 3px #0870c4">
  <div class="pv" style="background:#d3d3d3"><svg style="left:38px;top:17px" width="34" height="34" viewBox="0 0 34 34"><circle cx="17" cy="17" r="15.5" fill="none" stroke="#6e6e6e" stroke-width="1.6"/><path d="M6 6L28 28" stroke="#6e6e6e" stroke-width="1.6"/></svg></div>
  <div class="lbl">既定</div>
</div>
<div class="card" style="left:564px;top:428px;width:126px;height:109px"><div class="pv"><div class="band" style="background:#aeb0b4"></div><div class="body" style="background:#dedfe3"></div><div class="tab" style="background:#dedfe3"></div></div><div class="lbl">モーニング フォグ</div></div>
<div class="card" style="left:702px;top:428px;width:126px;height:109px"><div class="pv"><div class="band" style="background:#87b4bd"></div><div class="body" style="background:#c9dfe4"></div><div class="tab" style="background:#c9dfe4"></div></div><div class="lbl">アイシー ミント</div></div>
<div class="card" style="left:840px;top:428px;width:126px;height:109px"><div class="pv"><div class="band" style="background:#48a4a3"></div><div class="body" style="background:#74d0d0"></div><div class="tab" style="background:#74d0d0"></div></div><div class="lbl">ティール</div></div>
<div class="card" style="left:978px;top:428px;width:126px;height:109px"><div class="pv"><div class="band" style="background:#6c9cc3"></div><div class="body" style="background:#a8c5dc"></div><div class="tab" style="background:#a8c5dc"></div></div><div class="lbl">クール ブリーズ</div></div>
<div class="card" style="left:1116px;top:428px;width:126px;height:109px"><div class="pv"><div class="band" style="background:#d7b3ae"></div><div class="body" style="background:#f0e2e2"></div><div class="tab" style="background:#f0e2e2"></div></div><div class="lbl">シルキー ピンク</div></div>
<!-- row 2 -->
<div class="card" style="left:426px;top:549px;width:126px;height:109px"><div class="pv"><div class="band" style="background:#f073a0"></div><div class="body" style="background:#f8bad2"></div><div class="tab" style="background:#f8bad2"></div></div><div class="lbl">バブルガム</div></div>
<div class="card" style="left:564px;top:549px;width:126px;height:109px"><div class="pv"><div class="band" style="background:#d5b03f"></div><div class="body" style="background:#ede1bb"></div><div class="tab" style="background:#ede1bb"></div></div><div class="lbl">サニー デイ</div></div>
<div class="card" style="left:702px;top:549px;width:126px;height:109px"><div class="pv"><div class="band" style="background:#e38e33"></div><div class="body" style="background:#f0c99e"></div><div class="tab" style="background:#f0c99e"></div></div><div class="lbl">マンゴー パラダイ...</div></div>
<div class="card" style="left:840px;top:549px;width:126px;height:109px"><div class="pv"><div class="band" style="background:#3a3a3c"></div><div class="body" style="background:#555558"></div><div class="tab" style="background:#555558"></div></div><div class="lbl">ダーク グレー</div></div>
<div class="card" style="left:978px;top:549px;width:126px;height:109px"><div class="pv"><div class="band" style="background:#2c3240"></div><div class="body" style="background:#434d61"></div><div class="tab" style="background:#434d61"></div></div><div class="lbl">クール スレート</div></div>
<div class="card" style="left:1116px;top:549px;width:126px;height:109px"><div class="pv"><div class="band" style="background:#112b4c"></div><div class="body" style="background:#1f4b7e"></div><div class="tab" style="background:#1f4b7e"></div></div><div class="lbl">ネービー</div></div>
<!-- row 3 -->
<div class="card" style="left:426px;top:670px;width:126px;height:109px"><div class="pv"><div class="band" style="background:#4a2474"></div><div class="body" style="background:#6c38ae"></div><div class="tab" style="background:#6c38ae"></div></div><div class="lbl">ジューシー プラム</div></div>
<div class="card" style="left:564px;top:670px;width:126px;height:109px"><div class="pv"><div class="band" style="background:#6c0e12"></div><div class="body" style="background:#9d151e"></div><div class="tab" style="background:#9d151e"></div></div><div class="lbl">スパイシー レッド</div></div>
<div class="card" style="left:702px;top:670px;width:126px;height:109px"><div class="pv"><div class="band" style="background:#183e1f"></div><div class="body" style="background:#256433"></div><div class="tab" style="background:#256433"></div></div><div class="lbl">グリーン</div></div>
<!-- more themes -->
<div class="a" style="left:840px;top:670px;width:264px;height:108px;background:#0078d4;border-radius:3px;overflow:hidden">
  <div class="a" style="left:29px;top:14px;width:2px;height:2px;background:#9cc8f0;border-radius:1px"></div>
  <div class="a" style="left:44px;top:22px;width:2px;height:2px;background:#9cc8f0;border-radius:1px"></div>
  <div class="a" style="left:26px;top:73px;width:2px;height:2px;background:#9cc8f0;border-radius:1px"></div>
  <div class="a" style="left:40px;top:78px;width:2px;height:2px;background:#9cc8f0;border-radius:1px"></div>
  <div class="a" style="left:245px;top:66px;width:2px;height:2px;background:#9cc8f0;border-radius:1px"></div>
  <div class="a" style="left:238px;top:74px;width:2px;height:2px;background:#9cc8f0;border-radius:1px"></div>
  <svg style="left:34px;top:13px" width="198" height="64" viewBox="0 0 198 64">
   <defs><radialGradient id="sea" cx=".65" cy=".1" r=".9"><stop offset="0" stop-color="#2a9ab0"/><stop offset=".35" stop-color="#135a80"/><stop offset="1" stop-color="#06183a"/></radialGradient>
   <linearGradient id="sky" x1="0" y1="0" x2="0" y2="1"><stop offset="0" stop-color="#4f8ccc"/><stop offset=".35" stop-color="#dfe8f0"/><stop offset=".55" stop-color="#8aa8b0"/><stop offset=".7" stop-color="#4f7a3a"/><stop offset="1" stop-color="#3d6a2c"/></linearGradient>
   <linearGradient id="cloud" x1="0" y1="0" x2="0" y2="1"><stop offset="0" stop-color="#c4c6c8"/><stop offset=".5" stop-color="#dcdfe0"/><stop offset=".7" stop-color="#9da3a6"/><stop offset="1" stop-color="#b8bcbe"/></linearGradient>
   <linearGradient id="nite" x1="0" y1="0" x2="0" y2="1"><stop offset="0" stop-color="#1c2a48"/><stop offset=".6" stop-color="#2f4466"/><stop offset="1" stop-color="#3c587a"/></linearGradient></defs>
   <rect x=".5" y="11.5" width="21" height="40" fill="#f2eeee" stroke="#8fbde8"/>
   <path d="M1 20c6-3 14-2 20 2v8c-5-3-12-4-20-2z" fill="#e8707e"/><path d="M5 33c6 2 11 6 16 12v6H8c-2-6-4-12-3-18z" fill="#f39070"/>
   <rect x="21.5" y="5.5" width="26" height="53" fill="url(#cloud)" stroke="#8fbde8"/>
   <path d="M22 48l14-8 11 3v15H22z" fill="#6d7174"/><path d="M26 47l8-5" stroke="#e7e0b0" stroke-width="1.2"/><rect x="42" y="38" width="4" height="8" fill="#333"/>
   <rect x="149.5" y="5.5" width="26" height="53" fill="url(#sky)" stroke="#8fbde8"/>
   <ellipse cx="160" cy="18" rx="9" ry="3" fill="#f4f6f8"/><ellipse cx="168" cy="40" rx="8" ry="4" fill="#cfd8d8"/>
   <rect x="175.5" y="11.5" width="21" height="40" fill="url(#nite)" stroke="#8fbde8"/>
   <path d="M178 30l18 10v4l-18-10z" fill="#1a2236"/>
   <rect x="47.5" y=".5" width="102" height="63" fill="url(#sea)" stroke="#a9c8e6"/>
   <ellipse cx="120" cy="23" rx="27" ry="14" transform="rotate(-30 120 23)" fill="#6e5f45"/>
   <ellipse cx="121" cy="23" rx="23" ry="10.5" transform="rotate(-30 121 23)" fill="#978160"/>
   <path d="M96 33L66 44" stroke="#b49f74" stroke-width="2.2"/><path d="M104 30l30-16M112 20l8 10" stroke="#3e3526" stroke-width="1.6"/>
   <ellipse cx="72" cy="30" rx="16" ry="12" fill="#1c4a6a" opacity=".6"/>
   <circle cx="93" cy="6" r="1" fill="#8fe0e8"/><circle cx="100" cy="10" r="1" fill="#8fe0e8"/><circle cx="87" cy="52" r="1" fill="#a0e8e0"/><circle cx="95" cy="55" r="1" fill="#a0e8e0"/>
  </svg>
  <div class="t" style="left:-4px;top:80px;width:264px;text-align:center;font-size:12px;color:#fff">その他のテーマを検索</div>
  <svg style="left:242px;top:87px" width="11" height="11" viewBox="0 0 11 11" fill="none" stroke="#fff" stroke-width="1"><path d="M4.5 1.5H2.5c-.6 0-1 .4-1 1v6c0 .6.4 1 1 1h6c.6 0 1-.4 1-1V6.5M6.5 1h3.5v3.5M10 1L5 6"/></svg>
</div>
<div class="t" style="left:426px;top:789px;font-size:12px;color:#676767">必要なものが見つかりませんでしたか? <span style="color:#1a73c0;border-bottom:1px solid #1a73c0;padding-bottom:0"><span class="l">Chrome</span> ウェブストア</span> でその他のテーマを検索します。</div>
<div class="t" style="left:426px;top:829px;font-size:14px;color:#1b1b1b">ズーム</div>
<div class="card" style="left:426px;top:860px;width:820px;height:68px"></div>
<div class="t" style="left:443px;top:873px;font-size:14px;color:#1b1b1b">ページのズーム</div>
<div class="t" style="left:443px;top:895px;font-size:12px;color:#676767">すべてのサイトの既定のズームレベルです。特定のサイトのズームレベルを表示するには、<span style="color:#1a73c0;border-bottom:1px solid #1a73c0">ズーム レベル</span> に移動します</div>
<div class="a" style="left:1140px;top:868px;width:90px;height:32px;background:#fff;border:1px solid #c8c8c8;border-radius:3px"></div>
<div class="t" style="left:1152px;top:874px;font-size:14.5px;color:#1b1b1b">100%</div>
<svg style="left:1201px;top:880px" width="14" height="9" viewBox="0 0 14 9"><path d="M1 1.5L7 7.5 13 1.5" fill="none" stroke="#333" stroke-width="1.2"/></svg>
<div class="t" style="left:426px;top:979px;font-size:20px;line-height:28px;color:#1b1b1b">ツール バーのカスタマイズ</div>
<div class="card" style="left:426px;top:1024px;width:820px;height:80px"></div>
<div class="a" style="left:426px;top:1072px;width:820px;height:1px;background:#e6e6e6"></div>
<svg style="left:445px;top:1041px" width="15" height="15" viewBox="0 0 15 15"><rect x=".75" y=".75" width="13.5" height="13.5" rx="2" fill="none" stroke="#242424" stroke-width="1.3"/><rect x=".75" y=".75" width="13.5" height="3.2" fill="#242424"/><path d="M4.2 3.5V14" stroke="#242424" stroke-width="1.2"/></svg>
<div class="t" style="left:478px;top:1038px;font-size:14px;color:#1b1b1b">タブ操作メニューを表示</div>
<div class="a" style="left:1190px;top:1038px;width:40px;height:20px;border-radius:10px;background:#0577d2"></div>
<div class="a" style="left:1215px;top:1043px;width:10px;height:10px;border-radius:50%;background:#fff"></div>

<!-- ===== MENU ===== -->
<div class="a" style="left:1541px;top:68px;width:379px;height:697px;background:#fff;border:1px solid #d2d2d2;border-right:none"></div>
<div class="a" style="left:1919px;top:68px;width:1px;height:697px;background:#d6d6d6"></div>
<div class="a" style="left:1544px;top:146px;width:373px;height:35px;background:#ececec"></div>
<div class="msep" style="top:186px"></div>
<div class="msep" style="top:223px"></div>
<div class="a" style="left:1873px;top:187px;width:1px;height:36px;background:#d6d6d6"></div>
<div class="msep" style="top:448px"></div>
<div class="msep" style="top:637px"></div>
<div class="msep" style="top:718px"></div>
<g>
<svg style="left:1558px;top:82px" width="16" height="16" viewBox="0 0 16 16" fill="none" stroke="#1b1b1b" stroke-width="1.2"><rect x=".8" y=".8" width="14.4" height="14.4" rx="2.5"/><path d="M6 .8V4.5h9.2"/><path d="M4 9.5h1.2M7.4 9.5h1.2M10.8 9.5h1.2" stroke-width="1.6"/></svg>
<svg style="left:1558px;top:118px" width="16" height="16" viewBox="0 0 16 16" fill="none" stroke="#1b1b1b" stroke-width="1.2"><rect x=".8" y=".8" width="14.4" height="14.4" rx="2.5"/><path d="M.8 4.5h14.4"/></svg>
<svg style="left:1558px;top:155px" width="18" height="17" viewBox="0 0 18 17" fill="none" stroke="#1b1b1b" stroke-width="1.2"><path d="M8 15.2H3.3c-1.4 0-2.5-1.1-2.5-2.5V3.3C.8 1.9 1.9.8 3.3.8h9.4c1.4 0 2.5 1.1 2.5 2.5V7"/><path d="M.8 4.5h14.4"/><circle cx="12.5" cy="10" r="1.6"/><path d="M9.5 16c.3-1.8 1.5-2.8 3-2.8s2.7 1 3 2.8M15 12.5c1 .2 1.8.8 2 1.8"/></svg>
<svg style="left:1558px;top:237px" width="18" height="16" viewBox="0 0 18 16" fill="none" stroke="#1b1b1b" stroke-width="1.2" stroke-linejoin="round"><path d="M7 1l1.9 4 4.4.6-3.2 3 .8 4.4L7 10.9l-3.9 2.1.8-4.4-3.2-3 4.4-.6z"/><path d="M11.5 6h6M12 9.5h5.5M12.5 13h5"/></svg>
<svg style="left:1558px;top:273px" width="17" height="17" viewBox="0 0 18 18" fill="none" stroke="#1b1b1b" stroke-width="1.2"><path d="M4 13.5c-1.5-.2-2.7-1.4-2.7-3V4.2c0-1.6 1.3-3 3-3h5.2c1.4 0 2.5.9 2.9 2.1"/><rect x="5" y="5" width="12" height="12" rx="2.5"/><path d="M11 7.8v6.4M7.8 11h6.4"/></svg>
<svg style="left:1558px;top:309px" width="17" height="17" viewBox="0 0 17 17" fill="none" stroke="#1b1b1b" stroke-width="1.2"><path d="M3.3 5A7 7 0 1 1 1.5 8.5"/><path d="M1.2 1.5v4.2h4.2M8.5 4.5v4.5l2.8 1.8"/></svg>
<svg style="left:1558px;top:345px" width="16" height="17" viewBox="0 0 16 17" fill="none" stroke="#1b1b1b" stroke-width="1.2"><path d="M8 1v11M3.5 7.5L8 12l4.5-4.5M2 15.5h12"/></svg>
<svg style="left:1558px;top:381px" width="17" height="17" viewBox="0 0 17 17" fill="none" stroke="#1b1b1b" stroke-width="1.2"><path d="M1 4.2h6.5v11.5H3c-1.1 0-2-.9-2-2zM1 9.8h14v4c0 1.1-.9 2-2 2H7.5M7.5 9.8V4.2"/><path d="M12.5.8l3.6 3.6-3.6 3.6-3.6-3.6z" stroke-linejoin="round"/></svg>
<svg style="left:1558px;top:417px" width="17" height="17" viewBox="0 0 17 17"><path d="M7 1.5c1.2 0 2 .8 2 1.8v.6h3.2c.5 0 .9.4.9.9V8h.6c1 0 1.8.8 1.8 2s-.8 2-1.8 2h-.6v3.2c0 .5-.4.9-.9.9H9.3v-.8c0-1-.9-1.8-2-1.8s-2 .8-2 1.8v.8H2.1c-.5 0-.9-.4-.9-.9V12h.8c1 0 1.8-.8 1.8-2S3 8 2 8h-.8V4.8c0-.5.4-.9.9-.9H5v-.6c0-1 .8-1.8 2-1.8z" fill="none" stroke="#1b1b1b" stroke-width="1.2" stroke-linejoin="round"/></svg>
<svg style="left:1558px;top:462px" width="17" height="17" viewBox="0 0 17 17" fill="none" stroke="#1b1b1b" stroke-width="1.2"><path d="M4 5V2.5C4 1.7 4.7 1 5.5 1h6c.8 0 1.5.7 1.5 1.5V5"/><path d="M4 12H2.5C1.7 12 1 11.3 1 10.5v-4C1 5.7 1.7 5 2.5 5h12c.8 0 1.5.7 1.5 1.5v4c0 .8-.7 1.5-1.5 1.5H13"/><rect x="4" y="9.5" width="9" height="6" rx="1.5"/></svg>
<svg style="left:1558px;top:498px" width="18" height="17" viewBox="0 0 18 17" fill="none" stroke="#1b1b1b" stroke-width="1.2"><path d="M7 15.5H3.5c-1.4 0-2.5-1.1-2.5-2.5V6c0-1.4 1.1-2.5 2.5-2.5h1.3L6.3 1h5.4l1.5 2.5h1.3c1.4 0 2.5 1.1 2.5 2.5v1"/><circle cx="9" cy="9" r="3.2"/><path d="M10 15.5l6.5-6.5 1 1-6.5 6.5H10z" fill="#1b1b1b"/></svg>
<svg style="left:1558px;top:534px" width="17" height="17" viewBox="0 0 17 17" fill="none" stroke="#aaaaaa" stroke-width="1.2"><path d="M6 3H3c-1.1 0-2 .9-2 2v8.5c0 1.1.9 2 2 2h8.5c1.1 0 2-.9 2-2V12"/><path d="M10.5 1.5L15.5 6l-5 4.5V8c-3 0-4.8.8-6 3 .3-3.8 2.3-6 6-6.3z" stroke-linejoin="round"/></svg>
<svg style="left:1558px;top:570px" width="16" height="18" viewBox="0 0 16 18" fill="none" stroke="#1b1b1b" stroke-width="1.2"><path d="M4 6V2.5C4 1.7 4.7 1 5.5 1h5L15 5.5v10c0 .8-.7 1.5-1.5 1.5H9"/><path d="M10 1v5h5"/><circle cx="5" cy="11" r="3.5"/><path d="M7.5 13.5L10.5 16.5"/></svg>
<svg style="left:1557.5px;top:649px" width="17" height="17" viewBox="0 0 17 17"><path d="M8.50 0.60 L8.64 0.60 L8.78 0.60 L8.91 0.61 L9.05 0.62 L9.19 0.63 L9.33 0.64 L9.46 0.66 L9.60 0.68 L9.73 0.71 L9.87 0.75 L10.00 0.80 L10.12 0.89 L10.23 1.03 L10.30 1.27 L10.34 1.64 L10.32 2.16 L10.27 2.72 L10.22 3.21 L10.21 3.55 L10.23 3.76 L10.27 3.89 L10.33 3.98 L10.39 4.04 L10.46 4.09 L10.54 4.13 L10.61 4.18 L10.68 4.22 L10.76 4.26 L10.83 4.30 L10.90 4.34 L10.98 4.38 L11.05 4.42 L11.12 4.47 L11.19 4.51 L11.26 4.55 L11.34 4.59 L11.42 4.63 L11.50 4.66 L11.61 4.66 L11.74 4.64 L11.94 4.55 L12.22 4.36 L12.62 4.08 L13.08 3.76 L13.52 3.48 L13.86 3.32 L14.11 3.27 L14.28 3.29 L14.42 3.36 L14.53 3.44 L14.63 3.54 L14.72 3.64 L14.81 3.75 L14.89 3.86 L14.97 3.97 L15.05 4.08 L15.13 4.20 L15.20 4.31 L15.27 4.43 L15.34 4.55 L15.41 4.67 L15.48 4.79 L15.54 4.91 L15.60 5.04 L15.66 5.16 L15.72 5.29 L15.77 5.41 L15.82 5.54 L15.86 5.67 L15.90 5.81 L15.91 5.95 L15.90 6.10 L15.83 6.26 L15.67 6.45 L15.36 6.66 L14.90 6.90 L14.38 7.14 L13.94 7.34 L13.64 7.50 L13.47 7.62 L13.37 7.73 L13.33 7.82 L13.31 7.91 L13.30 8.00 L13.30 8.08 L13.30 8.16 L13.30 8.25 L13.30 8.33 L13.30 8.42 L13.31 8.50 L13.30 8.58 L13.30 8.67 L13.30 8.75 L13.30 8.84 L13.30 8.92 L13.30 9.00 L13.31 9.09 L13.33 9.18 L13.37 9.27 L13.47 9.38 L13.64 9.50 L13.94 9.66 L14.38 9.86 L14.90 10.10 L15.36 10.34 L15.67 10.55 L15.83 10.74 L15.90 10.90 L15.91 11.05 L15.90 11.19 L15.86 11.33 L15.82 11.46 L15.77 11.59 L15.72 11.71 L15.66 11.84 L15.60 11.96 L15.54 12.09 L15.48 12.21 L15.41 12.33 L15.34 12.45 L15.27 12.57 L15.20 12.69 L15.13 12.80 L15.05 12.92 L14.97 13.03 L14.89 13.14 L14.81 13.25 L14.72 13.36 L14.63 13.46 L14.53 13.56 L14.42 13.64 L14.28 13.71 L14.11 13.73 L13.86 13.68 L13.52 13.52 L13.08 13.24 L12.62 12.92 L12.22 12.64 L11.94 12.45 L11.74 12.36 L11.61 12.34 L11.50 12.34 L11.42 12.37 L11.34 12.41 L11.26 12.45 L11.19 12.49 L11.12 12.53 L11.05 12.58 L10.98 12.62 L10.90 12.66 L10.83 12.70 L10.76 12.74 L10.68 12.78 L10.61 12.82 L10.54 12.87 L10.46 12.91 L10.39 12.96 L10.33 13.02 L10.27 13.11 L10.23 13.24 L10.21 13.45 L10.22 13.79 L10.27 14.28 L10.32 14.84 L10.34 15.36 L10.30 15.73 L10.23 15.97 L10.12 16.11 L10.00 16.20 L9.87 16.25 L9.73 16.29 L9.60 16.32 L9.46 16.34 L9.33 16.36 L9.19 16.37 L9.05 16.38 L8.91 16.39 L8.78 16.40 L8.64 16.40 L8.50 16.40 L8.36 16.40 L8.22 16.40 L8.09 16.39 L7.95 16.38 L7.81 16.37 L7.67 16.36 L7.54 16.34 L7.40 16.32 L7.27 16.29 L7.13 16.25 L7.00 16.20 L6.88 16.11 L6.77 15.97 L6.70 15.73 L6.66 15.36 L6.68 14.84 L6.73 14.28 L6.78 13.79 L6.79 13.45 L6.77 13.24 L6.73 13.11 L6.67 13.02 L6.61 12.96 L6.54 12.91 L6.46 12.87 L6.39 12.82 L6.32 12.78 L6.24 12.74 L6.17 12.70 L6.10 12.66 L6.02 12.62 L5.95 12.58 L5.88 12.53 L5.81 12.49 L5.74 12.45 L5.66 12.41 L5.58 12.37 L5.50 12.34 L5.39 12.34 L5.26 12.36 L5.06 12.45 L4.78 12.64 L4.38 12.92 L3.92 13.24 L3.48 13.52 L3.14 13.68 L2.89 13.73 L2.72 13.71 L2.58 13.64 L2.47 13.56 L2.37 13.46 L2.28 13.36 L2.19 13.25 L2.11 13.14 L2.03 13.03 L1.95 12.92 L1.87 12.80 L1.80 12.69 L1.73 12.57 L1.66 12.45 L1.59 12.33 L1.52 12.21 L1.46 12.09 L1.40 11.96 L1.34 11.84 L1.28 11.71 L1.23 11.59 L1.18 11.46 L1.14 11.33 L1.10 11.19 L1.09 11.05 L1.10 10.90 L1.17 10.74 L1.33 10.55 L1.64 10.34 L2.10 10.10 L2.62 9.86 L3.06 9.66 L3.36 9.50 L3.53 9.38 L3.63 9.27 L3.67 9.18 L3.69 9.09 L3.70 9.00 L3.70 8.92 L3.70 8.84 L3.70 8.75 L3.70 8.67 L3.70 8.58 L3.69 8.50 L3.70 8.42 L3.70 8.33 L3.70 8.25 L3.70 8.16 L3.70 8.08 L3.70 8.00 L3.69 7.91 L3.67 7.82 L3.63 7.73 L3.53 7.62 L3.36 7.50 L3.06 7.34 L2.62 7.14 L2.10 6.90 L1.64 6.66 L1.33 6.45 L1.17 6.26 L1.10 6.10 L1.09 5.95 L1.10 5.81 L1.14 5.67 L1.18 5.54 L1.23 5.41 L1.28 5.29 L1.34 5.16 L1.40 5.04 L1.46 4.91 L1.52 4.79 L1.59 4.67 L1.66 4.55 L1.73 4.43 L1.80 4.31 L1.87 4.20 L1.95 4.08 L2.03 3.97 L2.11 3.86 L2.19 3.75 L2.28 3.64 L2.37 3.54 L2.47 3.44 L2.58 3.36 L2.72 3.29 L2.89 3.27 L3.14 3.32 L3.48 3.48 L3.92 3.76 L4.38 4.08 L4.78 4.36 L5.06 4.55 L5.26 4.64 L5.39 4.66 L5.50 4.66 L5.58 4.63 L5.66 4.59 L5.74 4.55 L5.81 4.51 L5.88 4.47 L5.95 4.42 L6.02 4.38 L6.10 4.34 L6.17 4.30 L6.24 4.26 L6.32 4.22 L6.39 4.18 L6.46 4.13 L6.54 4.09 L6.61 4.04 L6.67 3.98 L6.73 3.89 L6.77 3.76 L6.79 3.55 L6.78 3.21 L6.73 2.72 L6.68 2.16 L6.66 1.64 L6.70 1.27 L6.77 1.03 L6.88 0.89 L7.00 0.80 L7.13 0.75 L7.27 0.71 L7.40 0.68 L7.54 0.66 L7.67 0.64 L7.81 0.63 L7.95 0.62 L8.09 0.61 L8.22 0.60 L8.36 0.60z" fill="none" stroke="#1b1b1b" stroke-width="1.2" stroke-linejoin="round"/><circle cx="8.5" cy="8.5" r="2.3" fill="none" stroke="#1b1b1b" stroke-width="1.3"/></svg>
<svg style="left:1557.5px;top:685.5px" width="17" height="17" viewBox="0 0 17 17" fill="none" stroke="#1b1b1b" stroke-width="1.2"><circle cx="8.5" cy="8.5" r="7.7"/><path d="M6.2 6.5c0-1.4 1-2.3 2.3-2.3s2.3.9 2.3 2.2c0 1.6-2.3 1.8-2.3 3.6"/><circle cx="8.5" cy="12.5" r=".8" fill="#1b1b1b" stroke="none"/></svg>
</g>
<div class="mi" style="top:81px">新しいタブ</div><div class="ms" style="top:81px"><span class="l">Ctrl+T</span></div>
<div class="mi" style="top:117px">新しいウィンドウ</div><div class="ms" style="top:117px"><span class="l">Ctrl+N</span></div>
<div class="mi" style="top:153px">新しい <span class="l">InPrivate</span> ウィンドウ</div><div class="ms" style="top:153px"><span class="l">Ctrl+Shift+N</span></div>
<div class="mi" style="top:194px">ズーム</div>
<div class="a" style="left:1759px;top:204px;width:14px;height:1px;background:#1b1b1b"></div>
<div class="t" style="left:1791px;top:194px;font-size:15px;color:#1b1b1b">100%</div>
<svg style="left:1844px;top:197px" width="15" height="15" viewBox="0 0 15 15"><path d="M7.5 0v15M0 7.5h15" stroke="#1b1b1b" stroke-width="1.1"/></svg>
<svg style="left:1887px;top:197px" width="16" height="16" viewBox="0 0 16 16" fill="none" stroke="#1b1b1b" stroke-width="1.1"><path d="M1 15L15 1M9 1h6v6M1 9v6h6"/></svg>
<div class="mi" style="top:235px">お気に入り</div><div class="ms" style="top:235px"><span class="l">Ctrl+Shift+O</span></div>
<div class="mi" style="top:271px">コレクション</div><div class="ms" style="top:271px"><span class="l">Ctrl+Shift+Y</span></div>
<div class="mi" style="top:307px">履歴</div><div class="ms" style="top:307px"><span class="l">Ctrl+H</span></div>
<div class="mi" style="top:343px">ダウンロード</div><div class="ms" style="top:343px"><span class="l">Ctrl+J</span></div>
<div class="mi" style="top:379px">アプリ</div>
<svg style="left:1898px;top:383px" width="8" height="12" viewBox="0 0 8 12"><path d="M1.5 1l5 5-5 5" fill="none" stroke="#1b1b1b" stroke-width="1.1"/></svg>
<div class="mi" style="top:415px">拡張機能</div>
<div class="mi" style="top:460px">印刷</div><div class="ms" style="top:460px"><span class="l">Ctrl+P</span></div>
<div class="mi" style="top:496px"><span class="l">Web</span> キャプチャ</div><div class="ms" style="top:496px"><span class="l">Ctrl+Shift+S</span></div>
<div class="mi" style="top:532px;color:#a8a8a8">共有</div>
<div class="mi" style="top:568px">ページ内の検索</div><div class="ms" style="top:568px"><span class="l">Ctrl+F</span></div>
<div class="mi" style="top:604px">その他のツール</div>
<svg style="left:1898px;top:608px" width="8" height="12" viewBox="0 0 8 12"><path d="M1.5 1l5 5-5 5" fill="none" stroke="#1b1b1b" stroke-width="1.1"/></svg>
<div class="mi" style="top:649px">設定</div>
<div class="mi" style="top:685px">ヘルプとフィードバック</div>
<svg style="left:1898px;top:689px" width="8" height="12" viewBox="0 0 8 12"><path d="M1.5 1l5 5-5 5" fill="none" stroke="#1b1b1b" stroke-width="1.1"/></svg>
<div class="mi" style="top:730px"><span class="l">Microsoft Edge</span> を閉じる</div>
<!-- mouse cursor -->
<svg style="left:1838px;top:146px" width="12" height="17" viewBox="0 0 12 17"><path d="M1 1v13.5l3.3-3.2 2.4 5.2 2-1-2.3-5h4.6z" fill="#111" stroke="#fff" stroke-width=".8"/></svg>

<!-- ===== TASKBAR ICONS ===== -->
<div class="a" style="left:36px;top:0;width:13px;height:1080px;background:linear-gradient(90deg,rgba(0,0,0,.12),rgba(0,0,0,.07) 30%,rgba(0,0,0,0))"></div>
<svg style="left:7px;top:7px" width="21" height="21" viewBox="0 0 21 21"><circle cx="10.5" cy="10.5" r="10" fill="#4caf50"/><path d="M14.2 7.2A5 5 0 1 0 14.2 13.8" fill="none" stroke="#fff" stroke-width="2.2"/><path d="M8.5 10.5H16M13.5 7.6l2.8 2.9-2.8 2.9" fill="none" stroke="#fff" stroke-width="2"/></svg>
<div class="t" style="left:1px;top:36px;width:34px;text-align:center;font-size:12.5px;font-weight:bold;color:#fff;letter-spacing:-.3px">22:34</div>
<svg style="left:7px;top:61px" width="21" height="21" viewBox="0 0 21 21"><defs><radialGradient id="ff" cx=".3" cy=".8" r="1"><stop offset="0" stop-color="#ff3750"/><stop offset=".5" stop-color="#ff8a16"/><stop offset="1" stop-color="#ffd43b"/></radialGradient></defs><circle cx="10.5" cy="11" r="9.5" fill="url(#ff)"/><circle cx="11" cy="10.5" r="4.5" fill="#7d4cdb"/><path d="M3 6c1-3 4-5 7-5-1 1-1.5 2-1.2 3.2C6 4.2 4 5 3 6z" fill="#ffbd2e"/><path d="M1.5 9c.3 5 4.2 10 10 10-2.5-1-5-3.5-4.6-7.5.2-1.5 1.5-2.7 2.5-3" fill="#ff6a1a"/></svg>
<div class="a" style="left:33px;top:69px;width:2px;height:6px;background:#5a8fc7"></div>
<svg style="left:7px;top:97px" width="20" height="19" viewBox="0 0 20 19"><rect x="0" y="0" width="20" height="4" rx="1" fill="#c8c39a"/><rect x="0" y="3" width="20" height="16" rx="1.5" fill="#8c8c8c"/><rect x="7" y="7.5" width="6" height="2" fill="#eee"/></svg>
<svg style="left:7px;top:129px" width="21" height="18" viewBox="0 0 21 18"><rect x="0" y="0" width="21" height="14" rx="1.5" fill="#dd3c3c"/><rect x="5" y="15" width="11" height="3" fill="#8c8c8c"/><rect x="5" y="4" width="7" height="6" rx="1" fill="#fff"/><path d="M12 7l4-3v6z" fill="#fff"/></svg>
<div class="a" style="left:33px;top:135px;width:2px;height:6px;background:#5a8fc7"></div>
<svg style="left:8px;top:161px" width="19" height="20" viewBox="0 0 19 20"><path d="M9.5 0l2.2 2.3 3.1-.6.9 3.1 2.9 1.4-1 3 1 3.1-2.9 1.3-.9 3.1-3.1-.6L9.5 20l-2.2-2.3-3.1.6-.9-3.1L.4 13.9l1-3.1-1-3 2.9-1.4.9-3.1 3.1.6z" fill="#5f6b75"/><circle cx="9.5" cy="10" r="4" fill="#eceff1"/></svg>
<div class="a" style="left:33px;top:168px;width:2px;height:6px;background:#c58a4a"></div>
<!-- bottom taskbar icons -->
<svg style="left:8px;top:818px" width="18" height="15" viewBox="0 0 18 15"><path d="M0 4.5h4L9 0v15L4 10.5H0z" fill="#fff"/><path d="M11.5 3.5c2 2 2 6 0 8M13.5 1c3.5 3.5 3.5 9.5 0 13" fill="none" stroke="#fff" stroke-width="1.8"/></svg>
<svg style="left:10px;top:848px" width="14" height="12" viewBox="0 0 14 12"><path d="M1 1h12v8.5H8.5L7 11 5.5 9.5H1z" fill="none" stroke="#fff" stroke-width="1.5" stroke-linejoin="round"/></svg>
<svg style="left:9px;top:870px" width="15" height="16" viewBox="0 0 15 16"><path d="M12.5 6.5L6.5 13c-1.5 1.6-3.8 1.7-5 .5s-1-3.3.5-4.9l6.8-7.3c1-1 2.4-1.1 3.3-.2s.7 2.3-.3 3.3L5.5 11c-.5.5-1.2.6-1.6.2s-.3-1.1.2-1.6l5.4-5.8" fill="none" stroke="#fff" stroke-width="1.3"/></svg>
<div class="a" style="left:6px;top:891px;width:22px;height:14px;background:#fff"></div>
<div class="a" style="left:12px;top:893px;width:10px;height:10px;border-radius:50%;background:#f50000"></div>
<svg style="left:8px;top:919px" width="19" height="13" viewBox="0 0 19 13"><rect x="0" y="0" width="13" height="13" rx="2" fill="#fff"/><path d="M13 6.5L19 1.5v10z" fill="#fff"/><circle cx="6.5" cy="6.5" r="3.8" fill="#4a7fd4"/></svg>
<svg style="left:7px;top:943px" width="20" height="13" viewBox="0 0 20 13"><rect x="0" y="0" width="20" height="13" rx="1" fill="#555"/><path d="M3 3h2M6.5 3h2M10 3h2M13.5 3h2M3 6h2M6.5 6h2M10 6h2M13.5 6h2M4 9.5h12" stroke="#eee" stroke-width="1.4"/></svg>
<svg style="left:9px;top:966px" width="16" height="15" viewBox="0 0 16 15"><path d="M8 5L1.5 2.8v8.5L8 14l6.5-2.7V2.8zM8 5v9M1.5 2.8L5 1l6.5 2.5M14.5 2.8L11 1 4.5 3.5M1 3.5L3 6.5 8 5M15 3.5L13 6.5 8 5" fill="none" stroke="#aab" stroke-width="1"/></svg>
<svg style="left:11px;top:991px" width="12" height="11" viewBox="0 0 12 11"><path d="M6 0l6 6.5H0z" fill="#fff"/><rect x="0" y="8.5" width="12" height="2.5" fill="#fff"/></svg>
<svg style="left:9px;top:1015px" width="16" height="23" viewBox="0 0 16 23"><rect x="5" y="0" width="6" height="2.5" fill="#fff"/><rect x="0.5" y="2" width="15" height="20.5" rx="2" fill="#fff"/><path d="M9.5 5L4.5 12.5h3l-1 6L11.5 11h-3z" fill="#1e2427"/></svg>
<svg style="left:5px;top:1051px" width="24" height="22" viewBox="0 0 24 22"><rect x="0.6" y="0.6" width="22.8" height="20.8" fill="#000" stroke="#ccc" stroke-width="1.2"/><path d="M3 20L12 9 21 20z" fill="#fff"/><path d="M5 3L19 19M17 3L9.5 12" stroke="#fff" stroke-width="1.6"/></svg>

<!-- ===== LOGO OVERLAY ===== -->
<div class="a" style="left:0;top:92px;width:338px;height:5px;background:#ffff00"></div>
<svg style="left:44px;top:56px" width="46" height="32" viewBox="0 0 46 32"><rect x="1" y="1" width="29" height="25" rx="1.5" fill="#fff" stroke="#000" stroke-width="2.2"/><path d="M9.5 26.5h12l1 3.5h-14z" fill="#000"/><path d="M7.5 30.5h16" stroke="#000" stroke-width="1"/><rect x="33" y="1" width="12" height="27" rx="1.5" fill="#000"/><rect x="36" y="6.5" width="6.5" height="1.4" fill="#fff"/><rect x="36" y="9.8" width="6.5" height="1.6" fill="#fff"/><circle cx="39" cy="21.5" r="2.4" fill="#fff"/></svg>
<svg style="left:90px;top:50px" width="256" height="42" viewBox="0 0 256 42"><g font-family="Liberation Sans" font-weight="bold" font-size="33" stroke-linejoin="round"><g transform="translate(19.71,33) scale(1.064,1)"><text x="0" y="0" text-anchor="middle" fill="#000" stroke="#000" stroke-width="5" transform="translate(2.4,2.6)">P</text><text x="0" y="0" text-anchor="middle" fill="#000" stroke="#000" stroke-width="5.6">P</text><text x="0" y="0" text-anchor="middle" fill="#fff" stroke="#fff" stroke-width="2.2">P</text></g><g transform="translate(44.09,33) scale(1.064,1)"><text x="0" y="0" text-anchor="middle" fill="#000" stroke="#000" stroke-width="5" transform="translate(2.4,2.6)">C</text><text x="0" y="0" text-anchor="middle" fill="#000" stroke="#000" stroke-width="5.6">C</text><text x="0" y="0" text-anchor="middle" fill="#fff" stroke="#fff" stroke-width="2.2">C</text></g><g transform="translate(62.61,33) scale(1.064,1)"><text x="0" y="0" text-anchor="middle" fill="#000" stroke="#000" stroke-width="5" transform="translate(2.4,2.6)">-</text><text x="0" y="0" text-anchor="middle" fill="#000" stroke="#000" stroke-width="5.6">-</text><text x="0" y="0" text-anchor="middle" fill="#fff" stroke="#fff" stroke-width="2.2">-</text></g><g transform="translate(79.18,33) scale(1.064,1)"><text x="0" y="0" text-anchor="middle" fill="#000" stroke="#000" stroke-width="5" transform="translate(2.4,2.6)">F</text><text x="0" y="0" text-anchor="middle" fill="#000" stroke="#000" stroke-width="5.6">F</text><text x="0" y="0" text-anchor="middle" fill="#fff" stroke="#fff" stroke-width="2.2">F</text></g><g transform="translate(102.58,33) scale(1.064,1)"><text x="0" y="0" text-anchor="middle" fill="#000" stroke="#000" stroke-width="5" transform="translate(2.4,2.6)">R</text><text x="0" y="0" text-anchor="middle" fill="#000" stroke="#000" stroke-width="5.6">R</text><text x="0" y="0" text-anchor="middle" fill="#fff" stroke="#fff" stroke-width="2.2">R</text></g><g transform="translate(126.97,33) scale(1.064,1)"><text x="0" y="0" text-anchor="middle" fill="#000" stroke="#000" stroke-width="5" transform="translate(2.4,2.6)">E</text><text x="0" y="0" text-anchor="middle" fill="#000" stroke="#000" stroke-width="5.6">E</text><text x="0" y="0" text-anchor="middle" fill="#fff" stroke="#fff" stroke-width="2.2">E</text></g><g transform="translate(150.38,33) scale(1.064,1)"><text x="0" y="0" text-anchor="middle" fill="#000" stroke="#000" stroke-width="5" transform="translate(2.4,2.6)">E</text><text x="0" y="0" text-anchor="middle" fill="#000" stroke="#000" stroke-width="5.6">E</text><text x="0" y="0" text-anchor="middle" fill="#fff" stroke="#fff" stroke-width="2.2">E</text></g><g transform="translate(174.77,33) scale(1.064,1)"><text x="0" y="0" text-anchor="middle" fill="#000" stroke="#000" stroke-width="5" transform="translate(2.4,2.6)">D</text><text x="0" y="0" text-anchor="middle" fill="#000" stroke="#000" stroke-width="5.6">D</text><text x="0" y="0" text-anchor="middle" fill="#fff" stroke="#fff" stroke-width="2.2">D</text></g><g transform="translate(201.10,33) scale(1.064,1)"><text x="0" y="0" text-anchor="middle" fill="#000" stroke="#000" stroke-width="5" transform="translate(2.4,2.6)">O</text><text x="0" y="0" text-anchor="middle" fill="#000" stroke="#000" stroke-width="5.6">O</text><text x="0" y="0" text-anchor="middle" fill="#fff" stroke="#fff" stroke-width="2.2">O</text></g><g transform="translate(229.38,33) scale(1.064,1)"><text x="0" y="0" text-anchor="middle" fill="#000" stroke="#000" stroke-width="5" transform="translate(2.4,2.6)">M</text><text x="0" y="0" text-anchor="middle" fill="#000" stroke="#000" stroke-width="5.6">M</text><text x="0" y="0" text-anchor="middle" fill="#fff" stroke="#fff" stroke-width="2.2">M</text></g></g></svg>

</body></html>
